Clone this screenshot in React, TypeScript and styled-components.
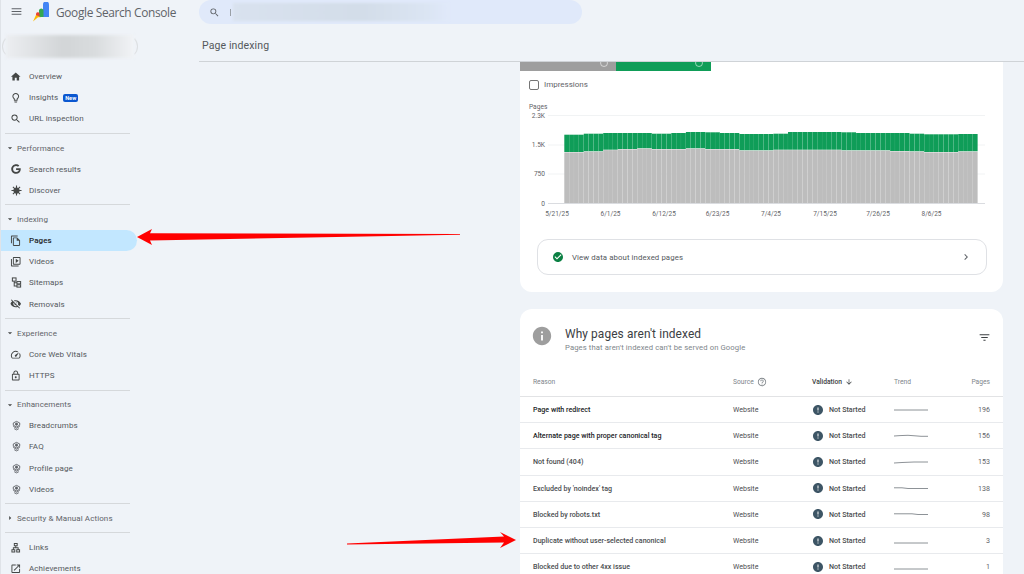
import { ReactNode } from "react"
import styled, { createGlobalStyle } from "styled-components"
import { FaGoogle } from "react-icons/fa"
import {
  MdMenu,
  MdHome,
  MdOutlineLightbulb,
  MdSearch,
  MdArrowDropDown,
  MdArrowRight,
  MdOutlineFileCopy,
  MdOutlineVideoLibrary,
  MdVisibilityOff,
  MdOutlineSpeed,
  MdOutlineLock,
  MdOutlineLan,
  MdOutlineOpenInNew,
  MdChevronRight,
  MdCheckCircle,
  MdInfo,
  MdFilterList,
  MdHelpOutline,
  MdArrowDownward,
  MdError,
} from "react-icons/md"

const GlobalStyle = createGlobalStyle`
  html, body {
    margin: 0;
    padding: 0;
    background: #eff3f8;
  }
  * {
    box-sizing: border-box;
  }
`

const Page = styled.div`
  position: relative;
  display: flex;
  width: 1024px;
  height: 574px;
  overflow: hidden;
  background: #eff3f8;
  border-left: 1px solid #dfe3e8;
  font-family: Roboto, "Liberation Sans", sans-serif;
  color: #444746;
`

const Sidebar = styled.aside`
  flex: 0 0 198px;
  display: flex;
  flex-direction: column;

  & > * {
    flex: none;
  }
`

const Brand = styled.div`
  display: flex;
  align-items: center;
  height: 23px;
  padding-left: 9px;
  color: #5f6368;
`

const BrandName = styled.span`
  margin-left: 5px;
  font-family: "Open Sans", Roboto, sans-serif;
  font-size: 11.9px;
  letter-spacing: -0.35px;
  color: #5f6368;
  white-space: nowrap;
`

const LogoMark = styled.svg`
  margin-left: 10px;
`

const PropertyPill = styled.div`
  position: relative;
  width: 136px;
  height: 23px;
  margin: 12px 0 8px 1px;
  border: 1px solid #dcdfe2;
  border-top-color: transparent;
  border-bottom-color: transparent;
  border-radius: 12px;
  background: #eff3f8;

  &::after {
    content: "";
    position: absolute;
    inset: -1px 3px;
    background: linear-gradient(90deg, #eceef1, #d2d5d7 45%, #d9dcde 70%, #f1f3f6);
    filter: blur(1.5px);
  }
`

const NavSection = styled.nav`
  display: flex;
  flex-direction: column;
  width: 136px;

  & > * {
    flex: none;
  }
`

const NavRow = styled.div<{ $active?: boolean }>`
  display: flex;
  align-items: center;
  gap: 7px;
  height: 21.2px;
  padding-left: 9px;
  border-radius: 0 11px 11px 0;
  background: ${(p) => (p.$active ? "#c2e7ff" : "transparent")};
  color: ${(p) => (p.$active ? "#1f1f1f" : "#54585c")};
  font-size: 8px;
  font-weight: ${(p) => (p.$active ? 500 : 400)};
  letter-spacing: 0.1px;
  white-space: nowrap;
`

const NavIcon = styled.span`
  display: flex;
  width: 12px;
  justify-content: center;
  font-size: 11.5px;
  color: #444746;
`

const GroupRow = styled.div`
  display: flex;
  align-items: center;
  gap: 2px;
  height: 21px;
  padding-left: 4px;
  font-size: 8px;
  letter-spacing: 0.1px;
  color: #5f6368;
  white-space: nowrap;

  svg {
    font-size: 10px;
    color: #444746;
  }
`

const NavDivider = styled.hr`
  width: 125px;
  height: 1px;
  margin: 3.5px 0 3.5px 4px;
  border: 0;
  background: #d5d8db;
`

const NewBadge = styled.span`
  margin-left: -2px;
  padding: 0 2px;
  border-radius: 2px;
  background: #0b57d0;
  color: #fff;
  font-size: 5.5px;
  font-weight: 700;
  line-height: 8px;
`

const Main = styled.main`
  flex: 1;
  display: flex;
  flex-direction: column;
  min-width: 0;

  & > * {
    flex: none;
  }
`

const SearchBar = styled.div`
  display: flex;
  align-items: center;
  width: 383px;
  height: 24px;
  padding-left: 10px;
  border-radius: 12px;
  background: #e0e9fa;
  color: #5f6368;
  font-size: 11px;
`

const SearchCaret = styled.span`
  width: 1px;
  height: 7px;
  margin-left: 10px;
  background: #9aa0a6;
`

const SearchBlur = styled.div`
  width: 216px;
  height: 18px;
  margin-left: 2px;
  background: linear-gradient(90deg, #d9e2ef, #d3dde9 60%, #dbe5f3 90%, #e0e9fa);
  filter: blur(1px);
`

const PageTitle = styled.h1`
  height: 38px;
  margin: 0;
  padding: 15px 0 0 3px;
  font-size: 10.5px;
  font-weight: 400;
  letter-spacing: 0.12px;
  color: #54585c;
  border-bottom: 1px solid #cfd3d7;
`

const Scroller = styled.div`
  display: flex;
  flex-direction: column;
  gap: 17px;
  padding: 0 21px 0 321px;

  & > * {
    flex: none;
  }
`

const Card = styled.section<{ $open?: boolean }>`
  background: #fff;
  border-radius: ${(p) => (p.$open ? "12px 12px 0 0" : "0 0 12px 12px")};
`

const TabStub = styled.div`
  display: flex;
  height: 9px;
`

const Tab = styled.div<{ $color: string }>`
  position: relative;
  width: 95.5px;
  overflow: hidden;
  background: ${(p) => p.$color};

  &::after {
    content: "";
    position: absolute;
    top: -3px;
    right: 8px;
    width: 6px;
    height: 6px;
    border: 1px solid rgba(255, 255, 255, 0.55);
    border-radius: 50%;
  }
`

const CheckRow = styled.div`
  display: flex;
  align-items: center;
  gap: 5px;
  height: 27px;
  margin-bottom: 2px;
  padding-left: 9px;
  font-size: 8px;
  color: #5f6368;
`

const CheckBox = styled.span`
  width: 10px;
  height: 10px;
  border: 1px solid #757575;
  border-radius: 2px;
`

const ChartFrame = styled.svg`
  display: block;
`

const LinkBox = styled.div`
  display: flex;
  align-items: center;
  height: 36px;
  margin: 11px 16px 17px 17px;
  padding: 0 14px;
  border: 1px solid #dfe1e5;
  border-radius: 11px;
  font-size: 7.8px;
  color: #54585c;
  letter-spacing: 0.1px;
`

const LinkText = styled.span`
  flex: 1;
  margin-left: 8px;
`

const CardHeader = styled.header`
  display: flex;
  align-items: flex-start;
  height: 59px;
  padding: 16px 12px 0 11px;

  & > svg:last-child {
    margin-top: 6px;
  }
`

const TitleBlock = styled.div`
  flex: 1;
  margin-left: 12px;
`

const CardTitle = styled.h2`
  margin: 0 0 -1px;
  font-size: 11.9px;
  font-weight: 400;
  line-height: 18px;
  letter-spacing: 0.1px;
  color: #3c4043;
`

const CardSub = styled.p`
  margin: 0;
  font-size: 7.7px;
  line-height: 11px;
  letter-spacing: 0.1px;
  color: #80868b;
`

const TableGrid = styled.div`
  display: grid;
  grid-template-columns: 200px 79px 82px 1fr 60px;
  align-items: center;
  padding: 0 13px;
`

const HeadRow = styled(TableGrid)`
  height: 29px;
  border-bottom: 1px solid #e2e3e5;
  font-size: 6.7px;
  color: #80868b;
`

const HeadCell = styled.span<{ $strong?: boolean; $end?: boolean }>`
  display: flex;
  align-items: center;
  gap: 3px;
  justify-content: ${(p) => (p.$end ? "flex-end" : "flex-start")};
  color: ${(p) => (p.$strong ? "#3c4043" : "#80868b")};
  font-weight: ${(p) => (p.$strong ? 500 : 400)};
`

const BodyRow = styled(TableGrid)`
  height: 26.2px;
  border-bottom: 1px solid #e8eaed;
  font-size: 7.1px;
  color: #4a4d50;
`

const ReasonCell = styled.span<{ $strong?: boolean }>`
  font-weight: 500;
  color: ${(p) => (p.$strong ? "#202124" : "#4a4d50")};
  white-space: nowrap;
`

const StatusCell = styled.span`
  display: flex;
  align-items: center;
  gap: 5px;
  font-weight: 500;

  svg {
    color: #3d5565;
  }
`

const CountCell = styled.span`
  text-align: right;
  color: #5f6368;
`

const ArrowLayer = styled.svg`
  position: absolute;
  left: -1px;
  top: 0;
  pointer-events: none;
`

type NavItem = { label: string; icon: ReactNode; active?: boolean; badge?: boolean }

const EnhancementGlyph = () => (
  <svg width="11" height="11" viewBox="0 0 24 24" fill="none" stroke="#5f6368" strokeWidth="2">
    <path d="M12 3l7 3.5v5L12 15l-7-3.500v-5z" />
    <circle cx="12" cy="9" r="2.400" fill="#5f6368" />
    <path d="M5 14l7 4 7-4M7 19l5 2.500 5-2.500" />
  </svg>
)

const SitemapGlyph = () => (
  <svg width="11" height="11" viewBox="0 0 24 24" fill="none" stroke="currentColor" strokeWidth="2.2">
    <rect x="3" y="2" width="8" height="7" />
    <rect x="13" y="10" width="8" height="5" />
    <rect x="13" y="17" width="8" height="5" />
    <path d="M7 9v10.500h6M7 12.500h6" />
  </svg>
)

const DiscoverGlyph = () => (
  <svg width="11" height="11" viewBox="0 0 24 24" fill="currentColor" stroke="currentColor" strokeWidth="2.400">
    <circle cx="12" cy="12" r="5.500" />
    <path d="M12 1v22M1 12h22M4.200 4.200l15.600 15.600M19.800 4.200L4.200 19.800" fill="none" />
  </svg>
)

const overview: NavItem[] = [
  { label: "Overview", icon: <MdHome /> },
  { label: "Insights", icon: <MdOutlineLightbulb />, badge: true },
  { label: "URL inspection", icon: <MdSearch /> },
]
const performance: NavItem[] = [
  { label: "Search results", icon: <FaGoogle size={10} /> },
  { label: "Discover", icon: <DiscoverGlyph /> },
]
const indexing: NavItem[] = [
  { label: "Pages", icon: <MdOutlineFileCopy />, active: true },
  { label: "Videos", icon: <MdOutlineVideoLibrary /> },
  { label: "Sitemaps", icon: <SitemapGlyph /> },
  { label: "Removals", icon: <MdVisibilityOff /> },
]
const experience: NavItem[] = [
  { label: "Core Web Vitals", icon: <MdOutlineSpeed /> },
  { label: "HTTPS", icon: <MdOutlineLock /> },
]
const enhancements: NavItem[] = ["Breadcrumbs", "FAQ", "Profile page", "Videos"].map((label) => ({
  label,
  icon: <EnhancementGlyph />,
}))
const extras: NavItem[] = [
  { label: "Links", icon: <MdOutlineLan /> },
  { label: "Achievements", icon: <MdOutlineOpenInNew /> },
]

function NavList({ items }: { items: NavItem[] }) {
  return (
    <>
      {items.map((item) => (
        <NavRow key={item.label} $active={item.active}>
          <NavIcon>{item.icon}</NavIcon>
          {item.label}
          {item.badge && <NewBadge>New</NewBadge>}
        </NavRow>
      ))}
    </>
  )
}

function Group({ label, closed }: { label: string; closed?: boolean }) {
  return (
    <GroupRow>
      {closed ? <MdArrowRight /> : <MdArrowDropDown />}
      {label}
    </GroupRow>
  )
}

// top and gray/green boundary of the bars, read off the chart, per stretch of days
const steps: [number, number, number][] = [
  [4, 134.7, 152],
  [4, 133.7, 151.3],
  [3, 133, 149.7],
  [4, 133, 149],
  [3, 133, 148.3],
  [4, 133.7, 149],
  [3, 133, 149],
  [4, 132, 148.3],
  [3, 132.3, 149],
  [4, 133, 149],
  [7, 134, 150.3],
  [3, 133.7, 149.7],
  [11, 132, 149.7],
  [3, 132.3, 150.3],
  [7, 133, 150.3],
  [4, 133, 151],
  [3, 133.7, 151.3],
  [7, 134.3, 152],
  [4, 134, 151.3],
]

const bars = steps.flatMap(([days, top, mid]) => Array.from({ length: days }, () => ({ top, mid })))

const axisLabels = [
  { y: 115, text: "2.3K" },
  { y: 144.5, text: "1.5K" },
  { y: 173.5, text: "750" },
  { y: 203, text: "0" },
]
const dateLabels = [
  { x: 557, text: "5/21/25" },
  { x: 610.500, text: "6/1/25" },
  { x: 664, text: "6/12/25" },
  { x: 717.500, text: "6/23/25" },
  { x: 771, text: "7/4/25" },
  { x: 825, text: "7/15/25" },
  { x: 878, text: "7/26/25" },
  { x: 931.500, text: "8/6/25" },
]

function IndexChart() {
  const left = 520
  const top = 100
  const barWidth = 413.4 / bars.length
  return (
    <ChartFrame width="483" height="128" viewBox={`${left} ${top} 483 128`} fontFamily="Roboto, sans-serif">
      <text x="529" y="109" fontSize="6.6" fill="#5f6368">
        Pages
      </text>
      {axisLabels.map((a) => (
        <g key={a.text}>
          <line x1="548" x2="985" y1={a.y + 0.5} y2={a.y + 0.5} stroke={a.text === "0" ? "#dadce0" : "#f1f3f4"} />
          <text x="545" y={a.y + 2.5} fontSize="6.6" textAnchor="end" fill="#5f6368">
            {a.text}
          </text>
        </g>
      ))}
      {bars.map((b, i) => {
        const x = 564.3 + i * barWidth
        return (
          <g key={i}>
            <rect x={x} y={b.top} width={barWidth - 0.08} height={b.mid - b.top} fill="#0f9d58" />
            <rect x={x} y={b.mid + 0.4} width={barWidth - 0.08} height={203 - b.mid - 0.4} fill="#bdbdbd" />
          </g>
        )
      })}
      {dateLabels.map((d) => (
        <text key={d.text} x={d.x} y="216" fontSize="6.5" textAnchor="middle" fill="#5f6368">
          {d.text}
        </text>
      ))}
    </ChartFrame>
  )
}

function Sparkline({ d }: { d: string }) {
  return (
    <svg width="36" height="10" viewBox="0 0 36 10">
      <path d={d} fill="none" stroke="#80868b" strokeWidth="0.9" />
    </svg>
  )
}

const rows = [
  { reason: "Page with redirect", count: "196", spark: "M0 5H34", strong: true },
  { reason: "Alternate page with proper canonical tag", count: "156", spark: "M0 5L6 4.600L14 4.300L22 4.900L27 5.300H34", strong: true },
  { reason: "Not found (404)", count: "153", spark: "M0 6L8 5.500L20 5H34" },
  { reason: "Excluded by 'noindex' tag", count: "138", spark: "M0 4.800L8 4.800L14 5.500H34" },
  { reason: "Blocked by robots.txt", count: "98", spark: "M0 4.800H18L24 5.500H34" },
  { reason: "Duplicate without user-selected canonical", count: "3", spark: "M0 7H34" },
  { reason: "Blocked due to other 4xx issue", count: "1", spark: "M0 7H34" },
]

export default function App() {
  return (
    <Page>
      <GlobalStyle />
      <Sidebar>
        <Brand>
          <MdMenu size={13} />
          <LogoMark width="18" height="20" viewBox="0 0 18 20">
            <path d="M10 2.500a3 3 0 0 1 6 0V15h-6z" fill="#4285f4" />
            <path d="M6 8a2.400 2.400 0 0 1 4.500 0v7H6z" fill="#34a853" />
            <path d="M3 12a2 2 0 0 1 3.500-1v4H3z" fill="#ea4335" />
            <path d="M0 19.500L3 13l5 2.200H5z" fill="#fbbc04" />
          </LogoMark>
          <BrandName>Google Search Console</BrandName>
        </Brand>
        <PropertyPill />
        <NavSection>
          <NavList items={overview} />
          <NavDivider />
          <Group label="Performance" />
          <NavList items={performance} />
          <NavDivider />
          <Group label="Indexing" />
          <NavList items={indexing} />
          <NavDivider />
          <Group label="Experience" />
          <NavList items={experience} />
          <NavDivider />
          <Group label="Enhancements" />
          <NavList items={enhancements} />
          <NavDivider />
          <Group label="Security & Manual Actions" closed />
          <NavDivider />
          <NavList items={extras} />
        </NavSection>
      </Sidebar>
      <Main>
        <SearchBar>
          <MdSearch size={11} />
          <SearchCaret />
          <SearchBlur />
        </SearchBar>
        <PageTitle>Page indexing</PageTitle>
        <Scroller>
          <Card>
            <TabStub>
              <Tab $color="#9e9e9e" />
              <Tab $color="#0f9d58" />
            </TabStub>
            <CheckRow>
              <CheckBox />
              Impressions
            </CheckRow>
            <IndexChart />
            <LinkBox>
              <MdCheckCircle size={12} color="#0b8043" />
              <LinkText>View data about indexed pages</LinkText>
              <MdChevronRight size={12} color="#5f6368" />
            </LinkBox>
          </Card>
          <Card $open>
            <CardHeader>
              <MdInfo size={22} color="#9e9e9e" />
              <TitleBlock>
                <CardTitle>Why pages aren't indexed</CardTitle>
                <CardSub>Pages that aren't indexed can't be served on Google</CardSub>
              </TitleBlock>
              <MdFilterList size={13} color="#3c4043" />
            </CardHeader>
            <HeadRow>
              <HeadCell>Reason</HeadCell>
              <HeadCell>
                Source <MdHelpOutline size={10} />
              </HeadCell>
              <HeadCell $strong>
                Validation <MdArrowDownward size={8} />
              </HeadCell>
              <HeadCell>Trend</HeadCell>
              <HeadCell $end>Pages</HeadCell>
            </HeadRow>
            {rows.map((row) => (
              <BodyRow key={row.reason}>
                <ReasonCell $strong={row.strong}>{row.reason}</ReasonCell>
                <span>Website</span>
                <StatusCell>
                  <MdError size={12} />
                  Not Started
                </StatusCell>
                <Sparkline d={row.spark} />
                <CountCell>{row.count}</CountCell>
              </BodyRow>
            ))}
          </Card>
        </Scroller>
      </Main>
      <ArrowLayer width="1024" height="574" viewBox="0 0 1024 574">
        <path d="M137 237L152 229L150 233.200L460 234L460 234.800L150 240.500L152 245z" fill="#ff0000" />
        <path d="M347 543.600L504 536.500L500 532L516 540L500 548L504 542.500L347 544.500z" fill="#ff0000" />
      </ArrowLayer>
    </Page>
  )
}
